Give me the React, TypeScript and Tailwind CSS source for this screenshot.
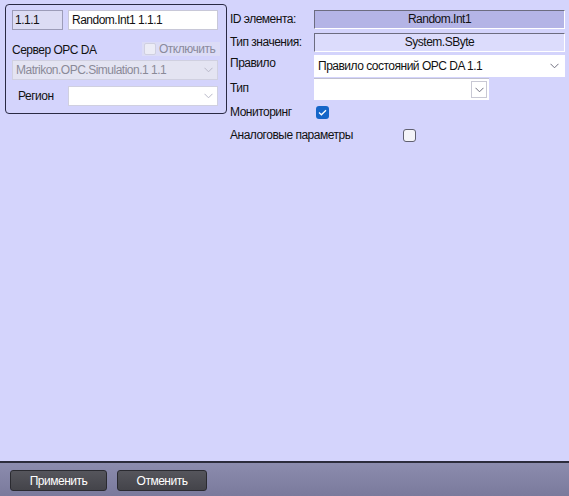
import React from "react";

const font = { fontFamily: '"Liberation Sans", Arial, sans-serif' };

function Chevron({ className = "" }: { className?: string }) {
  return (
    <svg width="9" height="6" viewBox="0 0 9 6" className={className}>
      <path d="M0.5 0.8 L4.5 4.8 L8.5 0.8" fill="none" stroke="currentColor" strokeWidth="1" />
    </svg>
  );
}

export default function App() {
  return (
    <div className="relative w-[569px] h-[496px] bg-[#d4d4fc] text-[12px] tracking-[-0.5px] text-[#111] overflow-hidden flex flex-col" style={font}>
      <div className="flex-1 flex items-start">
        {/* left panel */}
        <div className="ml-[5px] mt-[4px] w-[222px] h-[110px] border border-[#2a2a44] rounded-[4px] flex flex-col px-[6px] pt-[5px]">
          <div className="flex gap-[5px]">
            <div className="w-[51px] h-[20px] bg-[#dcdcf4] border border-[#9c9cb8] flex items-center px-[2px]">1.1.1</div>
            <div className="w-[150px] h-[20px] bg-white border border-[#c8c8d8] flex items-center px-[3px]">Random.Int1 1.1.1</div>
          </div>
          <div className="flex items-center justify-between h-[20px] mt-[10px]">
            <span>Сервер OPC DA</span>
            <div className="flex items-center gap-[3px] bg-[#dcdcf6] h-[14px] w-[78px] pl-[2px] -mt-[2px]">
              <span className="w-[12px] h-[12px] rounded-[2px] bg-[#ececf6] border border-[#d0d0e0]" />
              <span className="text-[#8a8a9c]">Отключить</span>
            </div>
          </div>
          <div className="w-[206px] h-[20px] bg-[#e4e4f2] border border-[#d0d0e0] flex items-center justify-between px-[3px] text-[#8a8a98]">
            <span>Matrikon.OPC.Simulation.1 1.1</span>
            <span className="w-[15px] h-[16px] flex items-center justify-center text-[#b8b8c8] -mr-[2px]"><Chevron /></span>
          </div>
          <div className="flex items-center mt-[6px]">
            <span className="w-[56px] pl-[6px]">Регион</span>
            <div className="w-[150px] h-[20px] bg-white border border-[#d0d0e0] flex items-center justify-end pr-[1px]">
              <span className="w-[15px] h-[16px] flex items-center justify-center text-[#b8b8c8]"><Chevron /></span>
            </div>
          </div>
        </div>

        {/* right form */}
        <div className="ml-[3px] flex-1 flex flex-col pt-[9px] pr-[4px]">
          <div className="flex items-center h-[20px]">
            <span className="w-[84px]">ID элемента:</span>
            <div className="flex-1 h-[19px] bg-[#b4b4e6] border-t border-l border-[#6c6c80] border-b-white border-r-white border-b border-r flex items-center justify-center">Random.Int1</div>
          </div>
          <div className="flex items-center h-[20px] mt-[3px]">
            <span className="w-[84px]">Тип значения:</span>
            <div className="flex-1 h-[19px] bg-[#dcdcfc] border-t border-l border-[#6c6c80] border-b-white border-r-white border-b border-r flex items-center justify-center">System.SByte</div>
          </div>
          <div className="flex items-start h-[22px] mt-[3px]">
            <span className="w-[84px] -mt-[1px]">Правило</span>
            <div className="flex-1 h-[22px] bg-white flex items-center justify-between pl-[4px] pr-[6px]">
              <span>Правило состояний OPC DA 1.1</span>
              <Chevron className="text-[#707080]" />
            </div>
          </div>
          <div className="flex items-start h-[22px] mt-[1px]">
            <span className="w-[84px] pt-[1px]">Тип</span>
            <div className="w-[175px] h-[22px] bg-white border-t border-[#c0c0d0] flex items-center justify-end pr-[2px]">
              <span className="w-[16px] h-[17px] border border-[#c8c8d4] flex items-center justify-center text-[#707080]"><Chevron /></span>
            </div>
          </div>
          <div className="flex items-center h-[20px] mt-[2px]">
            <span className="w-[86px]">Мониторинг</span>
            <span className="w-[13px] h-[13px] rounded-[3px] bg-[#1565c8] flex items-center justify-center">
              <svg width="9" height="7" viewBox="0 0 9 7">
                <path d="M1 3.6 L3.4 5.8 L8 1.2" fill="none" stroke="white" strokeWidth="1.3" />
              </svg>
            </span>
          </div>
          <div className="flex items-center h-[20px] mt-[3px]">
            <span className="w-[173px]">Аналоговые параметры</span>
            <span className="w-[13px] h-[13px] rounded-[3px] bg-[#f4f4f8] border border-[#606070]" />
          </div>
        </div>
      </div>

      {/* footer */}
      <div className="h-[35px] border-t-2 border-[#2c2c3c] bg-gradient-to-b from-[#8c8cae] to-[#7a7a9c] flex items-start gap-[10px] pl-[10px] pt-[7px]">
        <button className="w-[97px] h-[21px] rounded-[3px] border border-[#2a2a30] bg-gradient-to-b from-[#55555c] to-[#44444a] text-white text-[12px]">Применить</button>
        <button className="w-[90px] h-[21px] rounded-[3px] border border-[#2a2a30] bg-gradient-to-b from-[#55555c] to-[#44444a] text-white text-[12px]">Отменить</button>
      </div>
    </div>
  );
}
